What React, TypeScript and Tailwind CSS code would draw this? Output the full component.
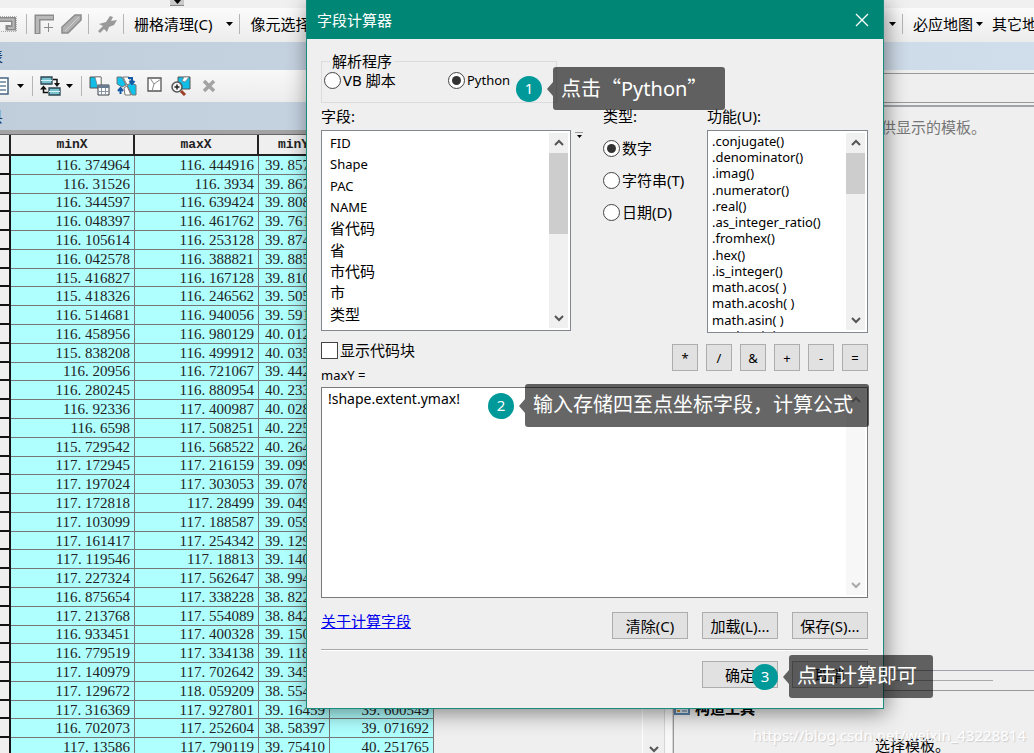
import { ReactNode, useState } from "react";

type AttributeRow = [string, string, string, string?];

const ROWS: AttributeRow[] = [
  ["116.374964", "116.444916", "39.857"],
  ["116.31526", "116.3934", "39.867"],
  ["116.344597", "116.639424", "39.808"],
  ["116.048397", "116.461762", "39.761"],
  ["116.105614", "116.253128", "39.874"],
  ["116.042578", "116.388821", "39.885"],
  ["115.416827", "116.167128", "39.810"],
  ["115.418326", "116.246562", "39.505"],
  ["116.514681", "116.940056", "39.591"],
  ["116.458956", "116.980129", "40.012"],
  ["115.838208", "116.499912", "40.035"],
  ["116.20956", "116.721067", "39.442"],
  ["116.280245", "116.880954", "40.233"],
  ["116.92336", "117.400987", "40.028"],
  ["116.6598", "117.508251", "40.225"],
  ["115.729542", "116.568522", "40.264"],
  ["117.172945", "117.216159", "39.099"],
  ["117.197024", "117.303053", "39.078"],
  ["117.172818", "117.28499", "39.049"],
  ["117.103099", "117.188587", "39.059"],
  ["117.161417", "117.254342", "39.129"],
  ["117.119546", "117.18813", "39.140"],
  ["117.227324", "117.562647", "38.994"],
  ["116.875654", "117.338228", "38.822"],
  ["117.213768", "117.554089", "38.842"],
  ["116.933451", "117.400328", "39.150"],
  ["116.779519", "117.334138", "39.118"],
  ["117.140979", "117.702642", "39.345"],
  ["117.129672", "118.059209", "38.554"],
  ["117.316369", "117.927801", "39.16459", "39.600549"],
  ["116.702073", "117.252604", "38.58397", "39.071692"],
  ["117.13586", "117.790119", "39.75410", "40.251765"],
];

const FIELDS = ["FID", "Shape", "PAC", "NAME", "省代码", "省", "市代码", "市", "类型"];

const FUNCTIONS = [
  ".conjugate()",
  ".denominator()",
  ".imag()",
  ".numerator()",
  ".real()",
  ".as_integer_ratio()",
  ".fromhex()",
  ".hex()",
  ".is_integer()",
  "math.acos( )",
  "math.acosh( )",
  "math.asin( )",
  "math.asinh( )",
];

const OPERATORS = ["*", "/", "&", "+", "-", "="];

const TYPES = ["数字", "字符串(T)", "日期(D)"];

const formatCell = (value?: string) => (value ? value.replace(".", ". ") : "");

export default function App() {
  return (
    <div className="relative flex h-screen w-full flex-col overflow-hidden bg-[#efefef] font-['Noto_Sans','Noto_Sans_CJK_SC',sans-serif] text-[15px] leading-5 text-black">
      <TopToolbar />
      <div className="h-7 flex-none bg-linear-to-r from-[#c0cddb] to-[#d0ddea] text-[#17375e]">
        <div className="-ml-3 pt-1">表</div>
      </div>
      <div className="flex min-h-0 flex-1">
        <TablePanel />
        <TemplatePanel />
      </div>
      <p className="absolute right-2 bottom-2 text-[15px] leading-5 text-white [text-shadow:1px_1px_1px_#cccccc]">
        https://blog.csdn.net/weixin_43228814
      </p>
      <FieldCalculator />
      <Callout step={1} className="left-[516px] top-[67px] w-[209px]">
        点击<CjkQuote>“</CjkQuote>Python<CjkQuote>”</CjkQuote>
      </Callout>
      <Callout step={2} className="left-[488px] top-[384px] w-[381px]">
        输入存储四至点坐标字段，计算公式
      </Callout>
      <Callout step={3} className="left-[752px] top-[655px] w-[181px]">
        点击计算即可
      </Callout>
    </div>
  );
}

function TopToolbar() {
  return (
    <>
      <div className="h-2 flex-none bg-[#f0f0f0] pl-[170px]">
        <div className="flex h-[6px] w-[14px] justify-center border-b border-[#888] bg-[#c9c9c9]">
          <Caret />
        </div>
      </div>
      <div className="flex h-[34px] flex-none items-center overflow-hidden bg-linear-to-b from-[#fbfbfb] to-[#ececec] pb-[2px] whitespace-nowrap">
        <button aria-label="区域" className="w-[18px]">
          <svg width="18" height="18" viewBox="0 0 18 18" fill="none">
            <path d="M0 1.500h16.500v15H1" stroke="#aaa" strokeDasharray="1 1" />
            <path d="M0 4.500h13.500V13H8v-3" stroke="#8a8a8a" strokeWidth="5" />
            <path d="M0 4.500h13.500V13H8" stroke="#b8b8b8" strokeWidth="2" />
          </svg>
        </button>
        <Separator className="ml-2 mr-[7px]" />
        <button aria-label="折角">
          <svg width="22" height="20" viewBox="0 0 22 20" fill="none">
            <path d="M3.500 20V3.500H20" stroke="#8c8c8c" strokeWidth="6" />
            <path d="M3.500 19V3.500H19" stroke="#b9b9b9" strokeWidth="3" />
            <path d="M14.500 9v9M10 13.500h9" stroke="#8c8c8c" />
          </svg>
        </button>
        <button aria-label="线" className="ml-[5px]">
          <svg width="21" height="20" viewBox="0 0 21 20" fill="none">
            <path d="M1 19v-6L14 1h6v5L7 19z" fill="#b0b0b0" stroke="#8c8c8c" strokeWidth="1.500" />
            <path d="M4 17L18 3" stroke="#d0d0d0" />
          </svg>
        </button>
        <Separator className="ml-[6px] mr-2" />
        <button aria-label="工具">
          <svg width="21" height="20" viewBox="0 0 21 20">
            <path d="M1 17l5-5-4-2 7-2 4-6 3 1-2 4 6-1-3 5-5 2-2 5-3-3-4 4z" fill="#999" />
          </svg>
        </button>
        <Separator className="ml-[5px] mr-[10px]" />
        <button>栅格清理(C)</button>
        <Caret className="ml-[14px]" />
        <Separator className="ml-[6px] mr-[10px]" />
        <button>像元选择</button>
        <div className="ml-auto flex w-[145px] flex-none items-center">
          <Caret />
          <Separator className="ml-[6px] mr-[10px]" />
          <button>必应地图</button>
          <Caret className="ml-[3px] mr-[9px]" />
          <button>其它地</button>
        </div>
      </div>
    </>
  );
}

function TablePanel() {
  return (
    <section className="flex w-[673px] flex-none flex-col overflow-hidden">
      <div className="flex h-8 flex-none items-center bg-linear-to-b from-[#f8f8f8] to-[#ececec]">
        <button aria-label="表选项" className="w-[9px]">
          <svg width="9" height="18" viewBox="0 0 9 18" fill="none">
            <path d="M0 1h8v16H0" fill="#fff" stroke="#456682" strokeWidth="1.500" />
            <path d="M0 5h6M0 9h6M0 13h6" stroke="#66829c" strokeWidth="1.500" />
          </svg>
        </button>
        <Caret className="ml-2" />
        <Separator className="ml-2 mr-[7px]" />
        <button aria-label="关联表">
          <svg width="22" height="20" viewBox="0 0 22 20" fill="none">
            <path d="M1 1h11v7H1zM9 12h11v7H9z" fill="#78c3d0" stroke="#2b4350" strokeWidth="1.300" />
            <path d="M1 4.500h11M9 15.500h11" stroke="#d8f4fa" />
            <path d="M13 3.500h4V8M8 16.500H3.500V13" stroke="#111" strokeWidth="1.500" />
            <path d="M14 7h6l-3 4zM0 13.500h7L3.500 9.500z" fill="#111" />
          </svg>
        </button>
        <Caret className="ml-1" />
        <Separator className="ml-2 mr-[7px]" />
        <button aria-label="按属性选择">
          <svg width="21" height="20" viewBox="0 0 21 20" fill="none">
            <path d="M1 1h11v11H1z" fill="#10bde6" stroke="#555" />
            <path d="M6 1h6v11H9z" fill="#fff" stroke="#777" strokeWidth=".7" />
            <path d="M9 9h11v10H9z" fill="#fff" stroke="#39404a" />
            <path d="M9 9h11v3H9z" fill="#687b91" />
            <path d="M12.500 12v7M16.500 12v7M9 15.500h11" stroke="#8a95a5" />
          </svg>
        </button>
        <button aria-label="切换选择" className="ml-[6px]">
          <svg width="21" height="20" viewBox="0 0 21 20" fill="none">
            <path d="M1 1h5l4 8-4 2-5-3zM11 9l3-2 6 2v10h-4z" fill="#10c3ed" stroke="#777" />
            <path d="M7 1h6l2 6-4 2zM8 12l3-2 4 9H9z" fill="#fff" stroke="#777" />
            <path d="M4.500 18v-5M2 15l2.500-3L7 15M12 2h4v4M13.500 5L16 8l2.500-3" stroke="#1459a5" strokeWidth="2" />
          </svg>
        </button>
        <button aria-label="清除选择" className="mb-1 ml-[10px]">
          <svg width="15" height="15" viewBox="0 0 15 15" fill="none">
            <path d="M1 1h13v13H1z" fill="#fff" stroke="#555" strokeWidth="1.300" />
            <path d="M3 1l4 6 7-5M7 7l-2 7" stroke="#888" />
          </svg>
        </button>
        <button aria-label="缩放至所选" className="ml-[9px]">
          <svg width="20" height="20" viewBox="0 0 20 20" fill="none">
            <path d="M7 1h12v12H7z" fill="#10bde6" stroke="#555" />
            <path d="M13 1h5l-4 5-3-1z" fill="#fff" stroke="#777" strokeWidth=".7" />
            <circle cx="6" cy="11" r="5" fill="#f4f4f4" stroke="#555" strokeWidth="1.500" />
            <path d="M3.500 11h5M6 8.500v5" stroke="#222" strokeWidth="1.500" />
            <path d="M10 15l4 4" stroke="#9c3f26" strokeWidth="3" />
          </svg>
        </button>
        <button aria-label="删除所选" className="ml-[11px]">
          <svg width="14" height="14" viewBox="0 0 14 14" fill="none">
            <path d="M2 2l10 10M12 2L2 12" stroke="#a3a3a3" strokeWidth="3.500" />
          </svg>
        </button>
      </div>
      <div className="h-7 flex-none bg-linear-to-r from-[#c0cddb] to-[#cbd9e7] text-[#17375e]">
        <div className="-ml-3 pt-1">县</div>
      </div>
      <div className="h-[5px] flex-none border-b border-[#666] bg-[#a3a3a3]" />
      <div className="flex min-h-0 flex-1">
        <div className="min-w-0 flex-1 overflow-hidden">
          <table className="h-[622px] w-[434px] table-fixed border-separate border-spacing-0 font-['Liberation_Serif',serif] text-[15px] leading-4 text-[#222]">
            <colgroup>
              <col className="w-[11px]" />
              <col className="w-[124px]" />
              <col className="w-[124px]" />
              <col className="w-[71px]" />
              <col className="w-[104px]" />
            </colgroup>
            <thead className="font-['Liberation_Mono',monospace] text-[13px]">
              <tr className="h-[21px]">
                <HeaderCell />
                <HeaderCell>minX</HeaderCell>
                <HeaderCell>maxX</HeaderCell>
                <HeaderCell>minY</HeaderCell>
                <HeaderCell>maxY</HeaderCell>
              </tr>
            </thead>
            <tbody>
              {ROWS.map((row, index) => (
                <tr key={index}>
                  <td className="border-r-2 border-b-2 border-[#151515] bg-[#efefef] p-0" />
                  <Cell>{formatCell(row[0])}</Cell>
                  <Cell>{formatCell(row[1])}</Cell>
                  <Cell start>{formatCell(row[2])}</Cell>
                  <Cell>{formatCell(row[3])}</Cell>
                </tr>
              ))}
            </tbody>
          </table>
        </div>
        <div className="flex w-[22px] flex-none items-end justify-center border-l border-white">
          <Chevron direction="down" />
        </div>
        <div className="w-[9px] flex-none border-x border-[#d5d5d5] bg-[#f8f8f8]" />
      </div>
    </section>
  );
}

function HeaderCell({ children }: { children?: ReactNode }) {
  return <th className="overflow-hidden border-r-2 border-b-2 border-[#222] bg-[#efefef] p-0 font-bold">{children}</th>;
}

function Cell({ children, start }: { children: ReactNode; start?: boolean }) {
  return (
    <td
      className={`overflow-hidden border-r border-b border-[#777] bg-[#afffff] py-0 pr-1 pl-[6px] whitespace-nowrap ${
        start ? "text-left" : "text-right"
      }`}
    >
      {children}
    </td>
  );
}

function TemplatePanel() {
  return (
    <section className="flex min-w-0 flex-1 flex-col border-l border-[#999]">
      <div className="mt-[3px] h-[30px] flex-none border-y border-[#999]" />
      <div className="mt-[2px] flex-1 border-t-2 border-b border-[#a0a4aa] pt-[10px]">
        <p className="ml-[207px] whitespace-nowrap text-[#777]">供显示的模板。</p>
      </div>
      <div className="mt-[9px] mr-[41px] h-px flex-none bg-[#aaa]" />
      <div className="mt-[9px] h-px flex-none bg-[#999]" />
      <div className="mt-2 flex h-[18px] flex-none items-center">
        <svg width="16" height="14" viewBox="0 0 16 14" fill="none">
          <path d="M1 1h14v12H1z" fill="#dbe9f5" stroke="#5b84ad" strokeWidth="2" />
          <path d="M3 4h3v3H3zM3 9h3v2H3z" fill="#c98a2b" />
          <path d="M8 5h5M8 10h5" stroke="#55718e" />
        </svg>
        <h2 className="ml-[5px] font-bold">构造工具</h2>
      </div>
      <p className="mt-[18px] h-[18px] flex-none pl-[201px] whitespace-nowrap">选择模板。</p>
    </section>
  );
}

function FieldCalculator() {
  const [parser, setParser] = useState("Python");
  const [type, setType] = useState(TYPES[0]);
  const [showBlock, setShowBlock] = useState(false);
  const [expression, setExpression] = useState("!shape.extent.ymax!");

  return (
    <form
      role="dialog"
      aria-label="字段计算器"
      className="absolute top-0 right-[150px] left-[306px] border-x border-b border-[#1a8c7d] bg-[#efefef] shadow-[2px_4px_20px_rgba(0,0,0,0.45)]"
      onSubmit={(event) => event.preventDefault()}
    >
      <header className="flex h-[39px] items-center justify-between bg-[#008675] pr-[14px] pl-[10px] text-white">
        <h1>字段计算器</h1>
        <button type="button" aria-label="关闭">
          <svg width="14" height="14" viewBox="0 0 14 14" stroke="#fff" strokeWidth="1.300">
            <path d="M1 1l12 12M13 1L1 13" />
          </svg>
        </button>
      </header>

      <div className="pt-[13px] pr-[15px] pb-5 pl-[14px]">
        <fieldset className="h-[51px] w-[236px] border border-[#dcdcdc]">
          <legend className="ml-2 px-[2px] leading-[18px]">解析程序</legend>
          <div className="flex items-center">
            <Radio name="parser" label="VB 脚本" checked={parser === "VB"} onChange={() => setParser("VB")} className="ml-[2px] w-[124px]" />
            <Radio name="parser" label="Python" checked={parser === "Python"} onChange={() => setParser("Python")} />
          </div>
        </fieldset>

        <div className="flex pt-[3px]">
          <div className="w-[250px] flex-none">
            <h2 className="mb-1">字段:</h2>
            <div className="flex h-[201px] border border-[#828790] bg-white p-[2px]">
              <ul role="listbox" aria-label="字段" className="grid h-[192px] flex-1 auto-rows-fr pl-[6px]">
                {FIELDS.map((field) => (
                  <li key={field} role="option" className={/[A-Z]/.test(field) ? "text-[13px]" : ""}>
                    {field}
                  </li>
                ))}
              </ul>
              <ScrollBar thumb="h-[81px]" />
            </div>
            <label className="mt-[9px] flex items-center gap-[2px]">
              <input
                type="checkbox"
                checked={showBlock}
                onChange={(event) => setShowBlock(event.target.checked)}
                className="size-[17px] appearance-none border border-[#444] bg-white checked:bg-[#444]"
              />
              显示代码块
            </label>
            <label htmlFor="expression" className="mt-[6px] mb-[3px] block text-[13px] leading-[18px]">
              maxY =
            </label>
          </div>
          <button type="button" aria-label="排序" className="mt-[26px] ml-1 flex h-2 w-2 flex-none items-center justify-center border-t border-[#999]">
            <svg width="5" height="3" viewBox="0 0 5 3">
              <path d="M0 0h5L2.500 3z" />
            </svg>
          </button>

          <div className="ml-5 flex min-w-0 flex-1 flex-col">
            <h2 className="mb-3">类型:</h2>
            <div className="grid gap-3">
              {TYPES.map((item) => (
                <Radio key={item} name="type" label={item} checked={type === item} onChange={() => setType(item)} />
              ))}
            </div>
          </div>

          <div className="flex w-[196px] flex-none flex-col items-end">
            <div className="w-[161px]">
              <h2 className="mb-1">功能(U):</h2>
              <div className="flex h-[203px] overflow-hidden border border-[#828790] bg-white p-[2px]">
                <ul role="listbox" aria-label="功能" className="grid h-[211px] flex-1 auto-rows-fr pl-[2px] text-[13px] leading-4 whitespace-nowrap">
                  {FUNCTIONS.map((fn) => (
                    <li key={fn} role="option">
                      {fn}
                    </li>
                  ))}
                </ul>
                <ScrollBar thumb="h-[41px]" />
              </div>
            </div>
            <div className="mt-[11px] flex w-full justify-between">
              {OPERATORS.map((operator) => (
                <button key={operator} type="button" className="h-[27px] w-[26px] border border-[#adadad] bg-[#e1e1e1] text-[13px]">
                  {operator}
                </button>
              ))}
            </div>
          </div>
        </div>

        <div className="flex h-[211px] border border-[#7a7a7a] bg-white p-[2px]">
          <textarea
            id="expression"
            value={expression}
            onChange={(event) => setExpression(event.target.value)}
            spellCheck={false}
            className="flex-1 resize-none px-1 text-[14px] leading-[18px] outline-none"
          />
          <ScrollBar faded />
        </div>

        <div className="mt-[14px] flex items-start justify-between">
          <a href="#about" className="-mt-px text-[#0000ee] underline">
            关于计算字段
          </a>
          <div className="flex gap-[14px]">
            <PushButton>清除(C)</PushButton>
            <PushButton>加载(L)...</PushButton>
            <PushButton>保存(S)...</PushButton>
          </div>
        </div>
        <hr className="mt-[10px] h-[2px] border-t border-b border-t-[#a8a8a8] border-b-white" />
        <div className="mt-[10px] flex justify-end gap-[14px]">
          <PushButton>确定</PushButton>
          <PushButton>取消</PushButton>
        </div>
      </div>
    </form>
  );
}

function PushButton({ children }: { children: ReactNode }) {
  return (
    <button type="button" className="h-[27px] w-[76px] border border-[#adadad] bg-[#e1e1e1] whitespace-nowrap">
      {children}
    </button>
  );
}

function Radio({
  name,
  label,
  checked,
  onChange,
  className = "",
}: {
  name: string;
  label: string;
  checked: boolean;
  onChange: () => void;
  className?: string;
}) {
  return (
    <label className={`flex items-center gap-[2px] whitespace-nowrap ${className}`}>
      <input
        type="radio"
        name={name}
        checked={checked}
        onChange={onChange}
        className="grid size-[17px] flex-none appearance-none place-items-center rounded-full border border-[#444] bg-white before:size-[9px] before:rounded-full checked:before:bg-[#333]"
      />
      <span className={label === "Python" ? "text-[13px]" : ""}>{label}</span>
    </label>
  );
}

function ScrollBar({ thumb, faded }: { thumb?: string; faded?: boolean }) {
  return (
    <div className={`flex w-[19px] flex-none flex-col items-center bg-[#f0f0f0] ${faded ? "opacity-50" : ""}`}>
      <div className="flex h-5 flex-none items-center">
        <Chevron direction="up" />
      </div>
      {thumb && <div className={`w-full flex-none bg-[#cdcdcd] ${thumb}`} />}
      <div className="mt-auto flex h-5 flex-none items-center">
        <Chevron direction="down" />
      </div>
    </div>
  );
}

function Chevron({ direction }: { direction: "up" | "down" }) {
  return (
    <svg width="10" height="8" viewBox="0 0 10 8" fill="none" stroke="#555" strokeWidth="2">
      <path d={direction === "up" ? "M1 6l4-4 4 4" : "M1 2l4 4 4-4"} />
    </svg>
  );
}

function Caret({ className = "" }: { className?: string }) {
  return (
    <svg width="7" height="4" viewBox="0 0 7 4" className={`flex-none ${className}`}>
      <path d="M0 0h7L3.500 4z" />
    </svg>
  );
}

function Separator({ className = "" }: { className?: string }) {
  return <div className={`h-5 w-px flex-none bg-[#b5b5b5] ${className}`} />;
}

function CjkQuote({ children }: { children: ReactNode }) {
  return <span className="font-['Noto_Sans_CJK_SC',sans-serif]">{children}</span>;
}

function Callout({ step, children, className }: { step: number; children: ReactNode; className: string }) {
  return (
    <div className={`absolute flex items-center ${className}`}>
      <span className="flex size-[26px] flex-none items-center justify-center rounded-full bg-[#009999] pb-[2px] text-[15px] text-white">{step}</span>
      <svg width="6" height="14" viewBox="0 0 6 14" className="ml-[5px] flex-none" fill="#000" fillOpacity="0.6">
        <path d="M6 0v14L0 7z" />
      </svg>
      <p className="h-[43px] flex-1 rounded-[3px] bg-black/60 pl-2 text-[20px] leading-[42px] whitespace-nowrap text-white">{children}</p>
    </div>
  );
}
